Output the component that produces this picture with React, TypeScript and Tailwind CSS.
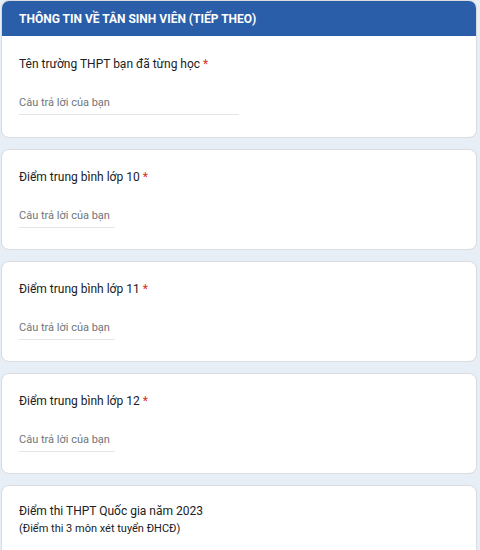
const questions = [
  { label: 'Điểm trung bình lớp 10', short: true },
  { label: 'Điểm trung bình lớp 11', short: true },
  { label: 'Điểm trung bình lớp 12', short: true },
];

function Answer({ wide }: { wide?: boolean }) {
  return (
    <div
      className={`mt-[21px] whitespace-nowrap border-b border-[#e3e5e8] pb-[3px] text-[11px] leading-4 text-[#70757a] ${
        wide ? 'w-[220px]' : 'w-[96px]'
      }`}
    >
      Câu trả lời của bạn
    </div>
  );
}

function Label({ text }: { text: string }) {
  return (
    <div className="text-[12px] leading-5 text-[#202124]">
      {text} <span className="text-[#d93025]">*</span>
    </div>
  );
}

export default function App() {
  return (
    <div
      className="h-[550px] overflow-hidden bg-[#e8eef6] pl-px pr-[3px]"
      style={{ fontFamily: 'Roboto, "Noto Sans", sans-serif' }}
    >
      <div className="flex flex-col gap-[11px]">
        <div className="overflow-hidden rounded-lg border border-[#dadce0] bg-white">
          <div className="flex h-[35px] items-center bg-[#2a5ea8] px-[17px] text-[12px] font-bold text-white">
            THÔNG TIN VỀ TÂN SINH VIÊN (TIẾP THEO)
          </div>
          <div className="px-[17px] pt-[18px] pb-[22px]">
            <Label text="Tên trường THPT bạn đã từng học" />
            <Answer wide />
          </div>
        </div>

        {questions.map((q) => (
          <div key={q.label} className="rounded-lg border border-[#dadce0] bg-white px-[17px] pt-[17px] pb-[21px]">
            <Label text={q.label} />
            <Answer />
          </div>
        ))}

        {/* last card runs past the bottom of the window */}
        <div className="min-h-[100px] rounded-lg border border-[#dadce0] bg-white px-[17px] pt-[16px] pb-6">
          <div className="text-[12px] leading-[18px] text-[#202124]">Điểm thi THPT Quốc gia năm 2023</div>
          <div className="text-[11px] leading-[17px] text-[#202124]">(Điểm thi 3 môn xét tuyển ĐHCĐ)</div>
        </div>
      </div>
    </div>
  );
}
